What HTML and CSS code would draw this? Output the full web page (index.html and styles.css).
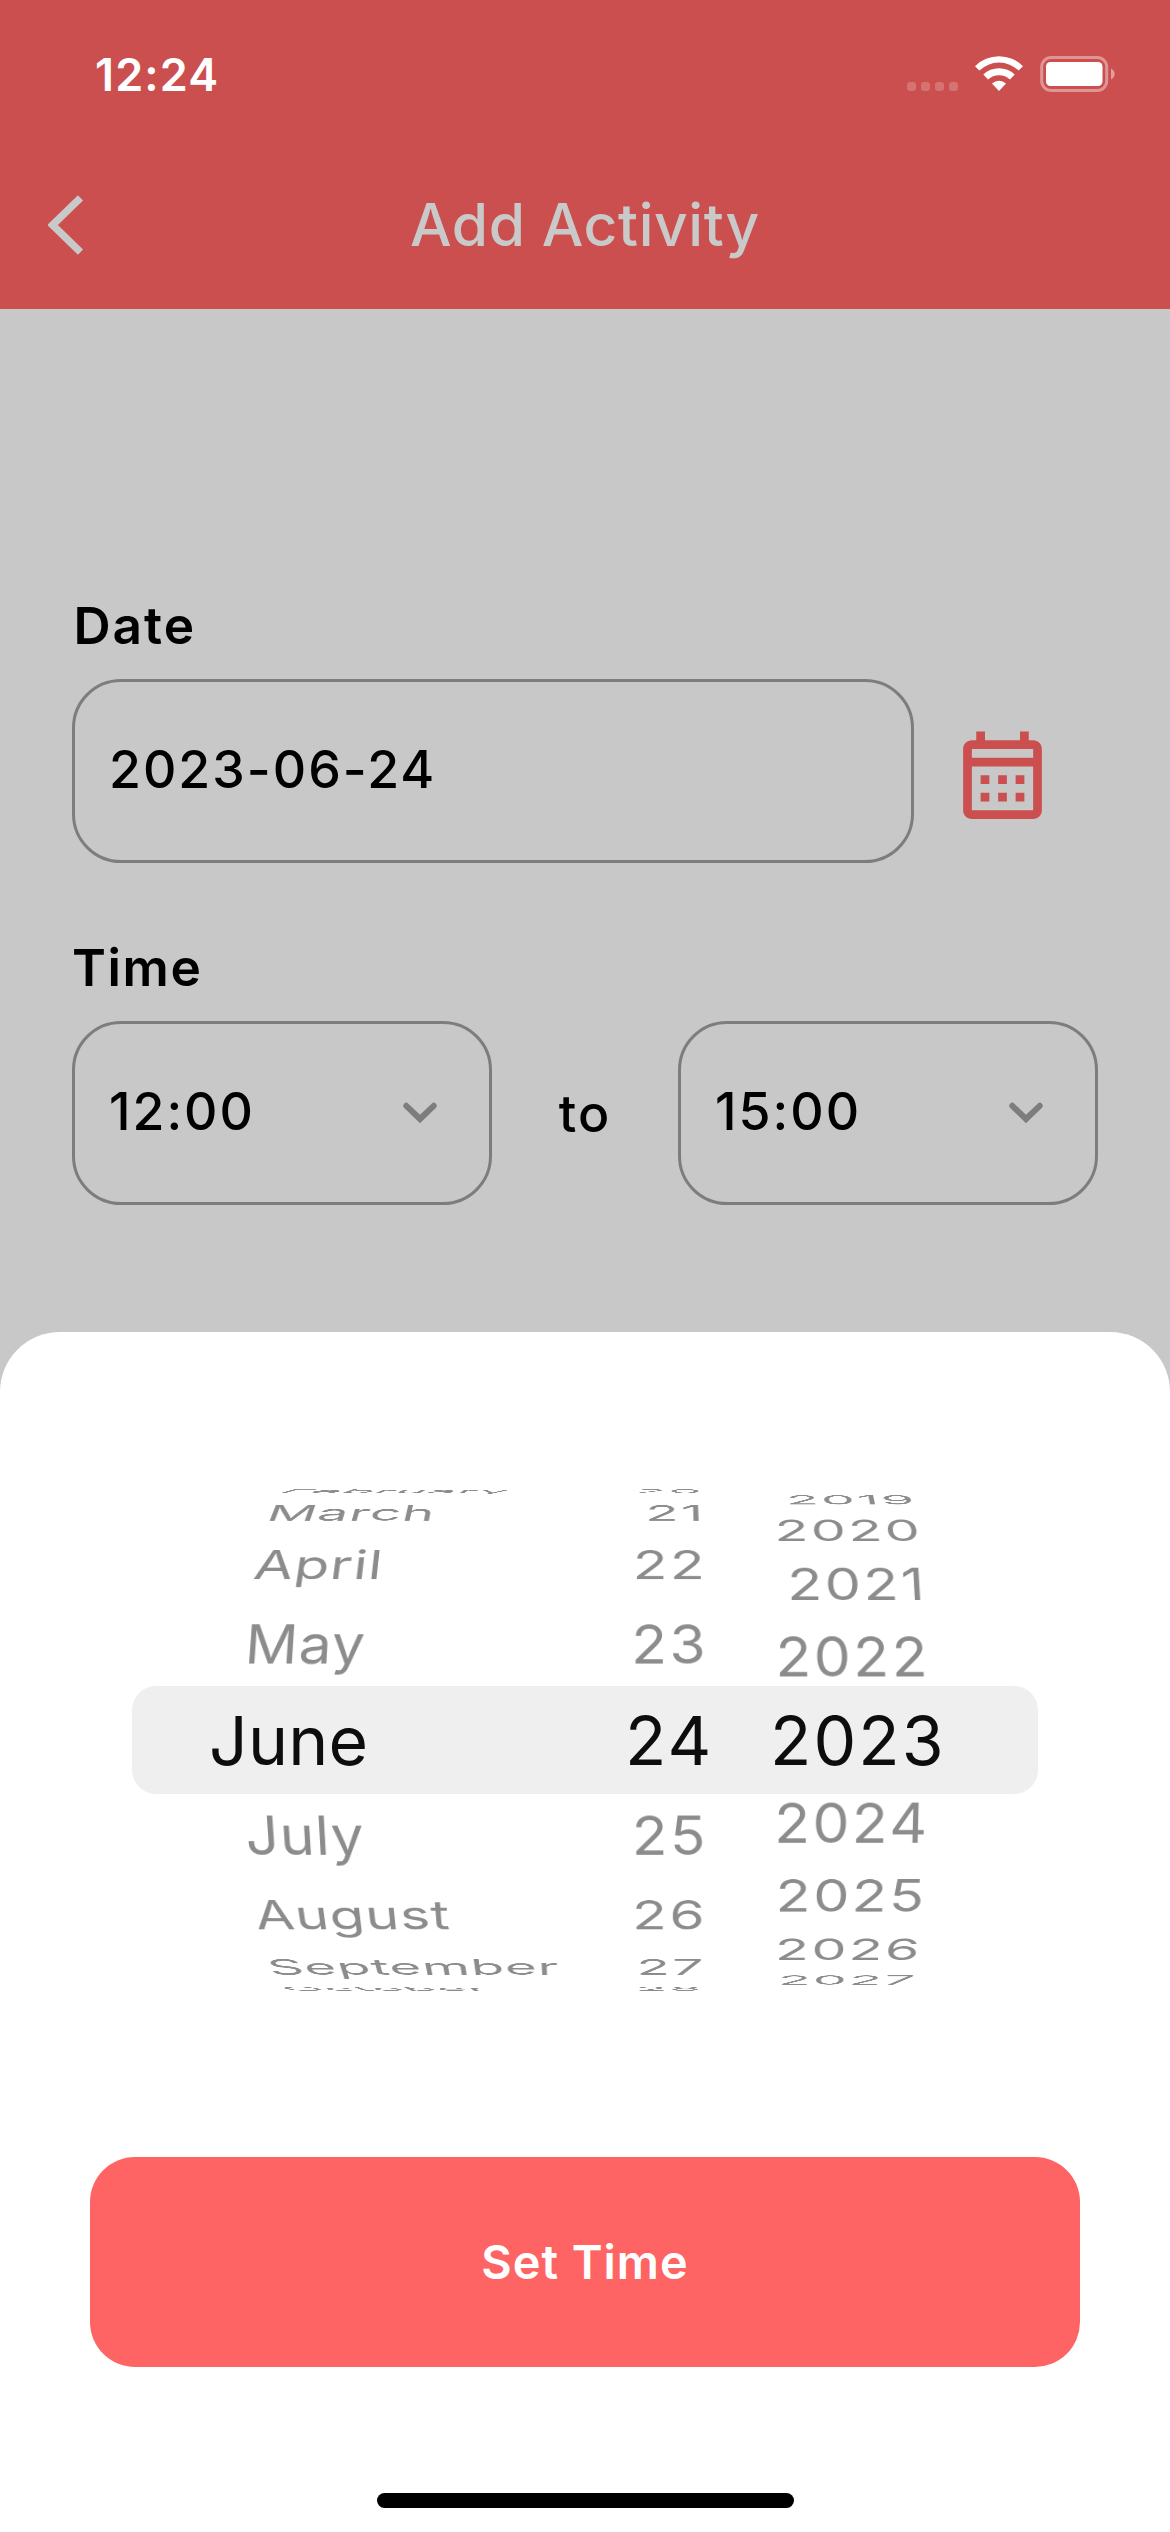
FILE: index.html
```html
<!DOCTYPE html>
<html lang="en">
<head>
<meta charset="utf-8">
<title>Add Activity</title>
<link rel="stylesheet" href="styles.css">
</head>
<body>
<div class="screen">
  <header class="header">
    <div class="status">
      <span class="clock">12:24</span>
      <div class="status-icons">
        <div class="signal"><i></i><i></i><i></i><i></i></div>
        <svg class="wifi" width="50" height="38" viewBox="0 0 50 38" fill="#fff">
          <path d="M1 12.2A34 34 0 0 1 49 12.2L44.6 16.6A28 28 0 0 0 5.4 16.6Z"/>
          <path d="M9.3 20.6A22.300 22.300 0 0 1 40.700 20.6L36 25.600A15.800 15.800 0 0 0 14 25.600Z"/>
          <path d="M18 29.400A10.600 10.600 0 0 1 32 29.400L25 37Z"/>
        </svg>
        <svg class="battery" width="76" height="38" viewBox="0 0 76 38">
          <rect x="1.700" y="2.500" width="65" height="33" rx="9.500" fill="none" stroke="#fff" stroke-opacity=".4" stroke-width="3"/>
          <rect x="6" y="7" width="56.500" height="24" rx="4.500" fill="#fff"/>
          <path d="M71 13.500C73 14.500 74.700 16.600 74.700 19S73 23.500 71 24.500Z" fill="#fff" fill-opacity=".45"/>
        </svg>
      </div>
    </div>
    <div class="titlebar">
      <svg class="back" width="36" height="60" viewBox="0 0 36 60"><path d="M32.500 2.900L4.500 30L32.500 57.100" fill="none" stroke="#c9c9c9" stroke-width="7.400"/></svg>
      <h1 class="title">Add Activity</h1>
    </div>
  </header>

  <main class="form">
    <div class="label">Date</div>
    <div class="row">
      <div class="field field-date"><span>2023-06-24</span></div>
      <svg class="calendar" width="105" height="105" viewBox="0 0 24 24"><path fill="#cb4f4f" d="M7 11H9V13H7V11M21 5V19C21 20.110 20.110 21 19 21H5C3.890 21 3 20.100 3 19V5C3 3.900 3.900 3 5 3H6V1H8V3H16V1H18V3H19C20.110 3 21 3.900 21 5M5 7H19V5H5V7M19 19V9H5V19H19M15 13V11H17V13H15M11 13V11H13V13H11M7 15H9V17H7V15M15 17V15H17V17H15M11 17V15H13V17H11Z"/></svg>
    </div>
    <div class="label label-time">Time</div>
    <div class="row row-time">
      <div class="field">
        <span>12:00</span>
        <svg width="34" height="22" viewBox="0 0 34 22"><path d="M3.300 3.800L17 17L30.700 3.800" fill="none" stroke="#7d7d7d" stroke-width="6" stroke-linecap="round"/></svg>
      </div>
      <span class="to">to</span>
      <div class="field">
        <span>15:00</span>
        <svg width="34" height="22" viewBox="0 0 34 22"><path d="M3.300 3.800L17 17L30.700 3.800" fill="none" stroke="#7d7d7d" stroke-width="6" stroke-linecap="round"/></svg>
      </div>
    </div>
  </main>

  <section class="sheet">
    <div class="picker">
      <div class="wheel wheel-month">
        <span class="item edge up4">February</span>
        <span class="item up3">March</span>
        <span class="item up2">April</span>
        <span class="item up1">May</span>
        <span class="item down1">July</span>
        <span class="item down2">August</span>
        <span class="item down3">September</span>
        <span class="item edge down4">October</span>
      </div>
      <div class="wheel wheel-day">
        <span class="item edge up4">20</span>
        <span class="item up3">21</span>
        <span class="item up2">22</span>
        <span class="item up1">23</span>
        <span class="item down1">25</span>
        <span class="item down2">26</span>
        <span class="item down3">27</span>
        <span class="item edge down4">28</span>
      </div>
      <div class="wheel wheel-year">
        <span class="item up4">2019</span>
        <span class="item up3">2020</span>
        <span class="item up2">2021</span>
        <span class="item up1">2022</span>
        <span class="item down1">2024</span>
        <span class="item down2">2025</span>
        <span class="item down3">2026</span>
        <span class="item down4">2027</span>
      </div>
      <div class="selected">
        <span class="selected-month">June</span>
        <span>24</span>
        <span>2023</span>
      </div>
    </div>
    <button class="submit">Set Time</button>
    <div class="home-indicator"></div>
  </section>
</div>
</body>
</html>
```
FILE: styles.css
```css
* { box-sizing: border-box; }

body {
  margin: 0;
  font-family: Inter, "Liberation Sans", sans-serif;
  background: #c8c8c8;
}

.screen {
  position: relative;
  width: 1170px;
  height: 2532px;
  overflow: hidden;
  background: #c8c8c8;
}

/* Header */
.header {
  height: 309px;
  background: #cb4f4f;
}

.status {
  display: flex;
  justify-content: space-between;
  align-items: center;
  height: 148px;
  padding: 0 54px 0 95px;
  color: #fff;
}

.clock {
  font-size: 45px;
  font-weight: 600;
  letter-spacing: 1.1px;
}

.status-icons {
  display: flex;
  align-items: center;
}

.signal {
  display: flex;
  gap: 5px;
  margin: 25px 16px 0 0;
}

.signal i {
  width: 9px;
  height: 9px;
  border-radius: 3px;
  background: rgba(255, 255, 255, .2);
}

.wifi { margin: -2px 16px 0 0; }

.titlebar {
  position: relative;
  display: flex;
  align-items: center;
  justify-content: center;
  height: 153px;
}

.back {
  position: absolute;
  left: 48px;
  top: 47px;
}

.title {
  margin: 0;
  font-size: 58.7px;
  font-weight: 450;
  letter-spacing: .6px;
  color: #c9c9c9;
}

/* Form */
.form {
  padding: 286px 72px 0;
  color: #000;
}

.label {
  height: 60px;
  margin: 0 0 24px 1.5px;
  font-size: 51.4px;
  font-weight: 600;
  line-height: 60px;
  letter-spacing: 2px;
}

.label-time {
  margin: 74px 0 24px 0;
  letter-spacing: 1.6px;
}

.row {
  display: flex;
  align-items: center;
}

.row-time { justify-content: space-between; }

.field {
  display: flex;
  align-items: center;
  justify-content: space-between;
  width: 420px;
  height: 184px;
  padding: 0 52px 0 34px;
  border: 3px solid #7d7d7d;
  border-radius: 49px;
}

.field span {
  padding-bottom: 4px;
}

.field-date { width: 842px; }

.field,
.to {
  font-size: 51.8px;
  font-weight: 500;
  letter-spacing: 2px;
}

.calendar {
  margin: 16px 0 0 36px;
}

/* Bottom sheet */
.sheet {
  position: absolute;
  left: 0;
  right: 0;
  bottom: 0;
  height: 1200px;
  padding-top: 156px;
  border-radius: 60px 60px 0 0;
  background: #fff;
}

.picker {
  position: relative;
  display: flex;
  height: 504px;
  padding-left: 242px;
  overflow: hidden;
}

.wheel {
  display: grid;
  align-items: center;
  perspective: 1700px;
}

.wheel-month {
  width: 386px;
  letter-spacing: 1px;
  perspective-origin: 343px 50%;
}

.wheel-day {
  width: 80.6px;
  letter-spacing: 2.6px;
  text-align: right;
  perspective-origin: 40px 50%;
}

.wheel-year {
  width: 222px;
  letter-spacing: 2.6px;
  text-align: right;
  perspective-origin: 71px 50%;
}

/* Items share one cell and are wrapped round a drum of 286px radius. */
.item {
  grid-area: 1 / 1;
  font-size: 59px;
  line-height: 72px;
  color: #8c8c8c;
  backface-visibility: hidden;
  transform: translateZ(-286px) rotateX(calc(var(--step) * var(--turn))) translateZ(286px);
}

/* The outermost rows are nearly edge-on; stretch them so they stay visible. */
.edge {
  transform: translateZ(-286px) rotateX(calc(var(--step) * var(--turn))) translateZ(288px) scaleY(2.2);
}

.wheel-month,
.wheel-day { --step: 19.75deg; }
.wheel-year { --step: 17.05deg; }

.up4 { --turn: 4; }
.up3 { --turn: 3; }
.up2 { --turn: 2; }
.up1 { --turn: 1; }
.down1 { --turn: -1; }
.down2 { --turn: -2; }
.down3 { --turn: -3; }
.down4 { --turn: -4; }

.selected {
  position: absolute;
  left: 132px;
  top: 198px;
  display: grid;
  grid-template-columns: 416px 145px auto;
  align-items: center;
  width: 906px;
  height: 108px;
  padding-left: 77px;
  border-radius: 24px;
  background: #efefef;
  font-size: 67.8px;
  letter-spacing: 2.1px;
  color: #0d0d0d;
}

.selected-month { letter-spacing: .2px; }

.submit {
  display: block;
  width: 990px;
  height: 210px;
  margin: 165px auto 0;
  padding: 0;
  border: 0;
  border-radius: 45px;
  background: #ff6464;
  color: #fff;
  font-family: inherit;
  font-size: 46.8px;
  font-weight: 600;
  letter-spacing: 1px;
}

.home-indicator {
  width: 417px;
  height: 15px;
  margin: 126px auto 0;
  border-radius: 8px;
  background: #000;
}
```
